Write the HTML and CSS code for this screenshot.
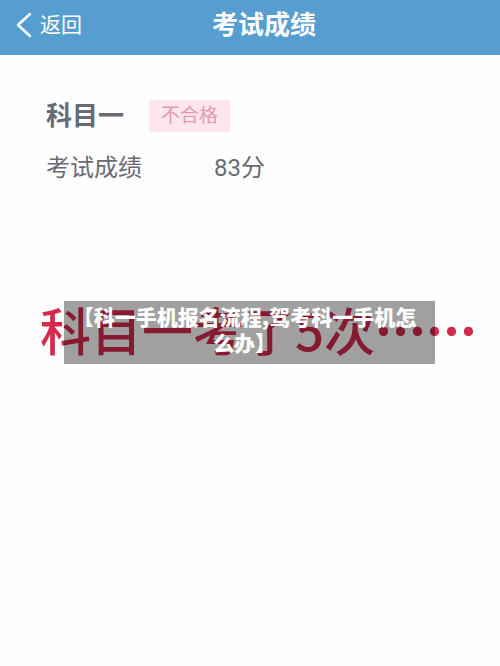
FILE: index.html
```html
<!DOCTYPE html>
<html lang="zh-CN">
<head>
  <meta charset="UTF-8" />
  <meta name="viewport" content="width=device-width, initial-scale=1.0"/>
  <title>考试成绩</title>
  <link rel="stylesheet" href="styles.css">
</head>
<body>

  <header class="navbar">
    <a class="back" href="#">
      <svg class="back-icon" viewBox="0 0 16 26" aria-hidden="true">
        <path d="M14 2 L2 13 L14 24" />
      </svg>
      返回
    </a>
    <h1>考试成绩</h1>
  </header>

  <main>
    <section class="result">
      <div class="subject">
        <h2>科目一</h2>
        <span class="status">不合格</span>
      </div>
      <dl class="score">
        <dt>考试成绩</dt>
        <dd>83分</dd>
      </dl>
    </section>

    <section class="banner">
      <p class="remark">科目一考了5次<span class="dots">……</span></p>
      <div class="caption">【科一手机报名流程,驾考科一手机怎么办】</div>
    </section>
  </main>

</body>
</html>
```
FILE: styles.css
```css
body {
  margin: 0;
  font-family: Roboto, "Noto Sans CJK SC", sans-serif;
  background: #fefefe;
  color: #686a74;
}

h1, h2, p, dl, dd {
  margin: 0;
}

.navbar {
  display: grid;
  grid-template-columns: 1fr auto 1fr;
  align-items: center;
  height: 50px;
  padding: 0 16px 5px;
  background: #569ecf;
  color: #fff;
}

.navbar h1 {
  padding-left: 28px;
  font-size: 26px;
  line-height: 36px;
}

.back {
  display: flex;
  align-items: center;
  gap: 8px;
  color: #fff;
  font-size: 21px;
  line-height: 32px;
  text-decoration: none;
}

.back-icon {
  width: 16px;
  height: 26px;
  fill: none;
  stroke: #fff;
  stroke-width: 2.5;
  stroke-linecap: round;
  stroke-linejoin: round;
}

.result {
  padding: 43px 46px 0;
}

.subject {
  display: flex;
  align-items: center;
  gap: 25px;
}

.subject h2 {
  font-size: 26px;
  line-height: 36px;
}

.status {
  padding: 0 12px;
  border-radius: 3px;
  background: #ffe6ee;
  color: #e39ab2;
  font-size: 19px;
  line-height: 32px;
}

.score {
  display: flex;
  gap: 72px;
  margin-top: 16px;
  font-size: 24px;
  line-height: 36px;
}

.banner {
  position: relative;
  margin-top: 107px;
}

.remark {
  padding-left: 40px;
  color: #d42a4c;
  font-family: "Noto Sans CJK SC", sans-serif;
  font-size: 51px;
  font-weight: 500;
  line-height: 72px;
  white-space: nowrap;
}

.dots {
  font-weight: 900;
}

/* translucent caption over the remark */
.caption {
  position: absolute;
  top: 8px;
  left: 64px;
  right: 65px;
  padding: 2px 14px 9px 4px;
  background: rgba(0, 0, 0, 0.37);
  color: #fff;
  font-family: "Noto Sans CJK SC", sans-serif;
  font-size: 21px;
  font-weight: 900;
  line-height: 26px;
  text-align: center;
}
```
